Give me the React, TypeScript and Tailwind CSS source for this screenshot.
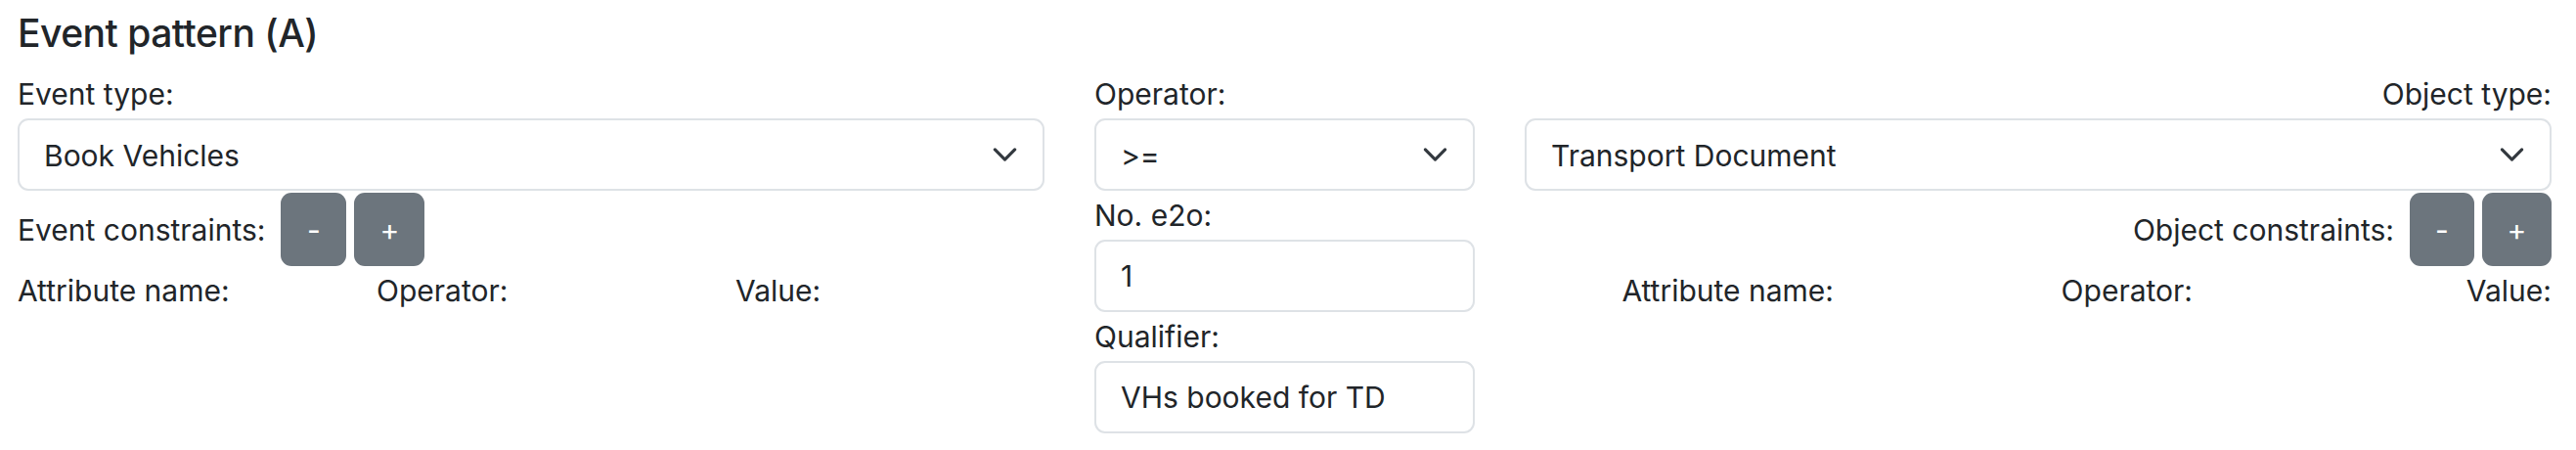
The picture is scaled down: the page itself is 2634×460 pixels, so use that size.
import React from "react";

const Chevron = () => (
  <svg
    className="absolute right-[25px] top-1/2 -translate-y-1/2"
    width="27"
    height="27"
    viewBox="0 0 16 16"
    fill="none"
  >
    <path d="m2 5 6 6 6-6" stroke="#343a40" strokeWidth="1.9" strokeLinecap="round" strokeLinejoin="round" />
  </svg>
);

const Select = ({ value }: { value: string }) => (
  <div className="relative flex h-[74px] items-center rounded-[11px] border-2 border-[#dee2e6] bg-white pl-[25px] pt-[1px]">
    <span>{value}</span>
    <Chevron />
  </div>
);

const Input = ({ value }: { value: string }) => (
  <div className="flex h-[74px] items-center rounded-[11px] border-2 border-[#dee2e6] bg-white pl-[25px]">
    <span>{value}</span>
  </div>
);

const Btn = ({ label, w }: { label: string; w: string }) => (
  <div
    className={`flex h-[75px] items-center justify-center rounded-[11px] bg-[#6c757d] text-white ${w}`}
  >
    {label}
  </div>
);

export default function App() {
  return (
    <div
      className="bg-white pl-[18px] pr-[25px] pt-[9px] text-[30px] leading-[42px] text-[#212529]"
      style={{ fontFamily: "Inter, 'Noto Sans', sans-serif" }}
    >
      <h4 className="text-[39px] leading-[50px] font-medium tracking-[-0.5px]">Event pattern (A)</h4>
      <div className="mt-[16px] flex items-start gap-[51px]">
        {/* Left column */}
        <div className="flex min-w-0 flex-1 flex-col">
          <div className="mb-[4px]">Event type:</div>
          <Select value="Book Vehicles" />
          <div className="mt-[2px] flex items-center gap-[8px]">
            <span className="mr-[8px]">Event constraints:</span>
            <Btn label="-" w="w-[67px]" />
            <Btn label="+" w="w-[72px]" />
          </div>
          <div className="mt-[4px] grid grid-cols-3 gap-x-[51px]">
            <div>Attribute name:</div>
            <div>Operator:</div>
            <div>Value:</div>
          </div>
        </div>

        {/* Middle column */}
        <div className="flex w-[389px] flex-col">
          <div className="mb-[4px]">Operator:</div>
          <Select value=">=" />
          <div className="mb-[4px] mt-[4px]">No. e2o:</div>
          <Input value="1" />
          <div className="mb-[4px] mt-[4px]">Qualifier:</div>
          <Input value="VHs booked for TD" />
        </div>

        {/* Right column */}
        <div className="flex min-w-0 flex-1 flex-col">
          <div className="mb-[4px] text-right">Object type:</div>
          <Select value="Transport Document" />
          <div className="mt-[2px] flex items-center justify-end gap-[8px]">
            <span className="mr-[8px]">Object constraints:</span>
            <Btn label="-" w="w-[66px]" />
            <Btn label="+" w="w-[71px]" />
          </div>
          <div className="mt-[4px] grid grid-cols-3 gap-x-[51px] text-right">
            <div>Attribute name:</div>
            <div>Operator:</div>
            <div>Value:</div>
          </div>
        </div>
      </div>
    </div>
  );
}
